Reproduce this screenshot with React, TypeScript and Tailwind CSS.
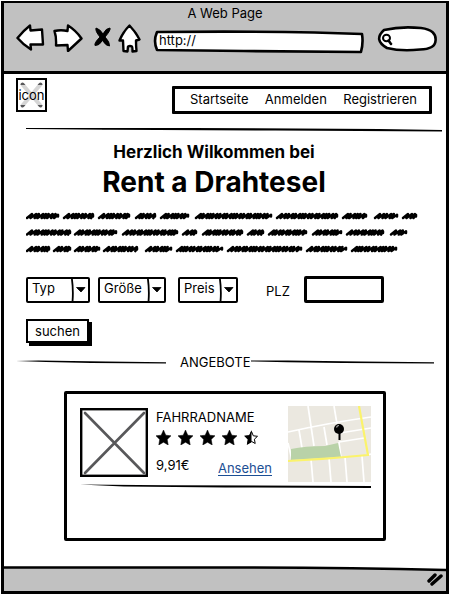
import React from "react";

const scribbleRows: [number, number][][] = [
  [[1, 32], [38, 67], [73, 103], [110, 129], [135, 162], [170, 245], [251, 311], [317, 340], [349, 371], [377, 390]],
  [[1, 44], [49, 90], [97, 151], [157, 170], [177, 216], [222, 237], [243, 280], [287, 315], [321, 357], [365, 380]],
  [[1, 23], [28, 44], [49, 73], [78, 111], [120, 145], [151, 196], [202, 275], [281, 320], [326, 370]],
];

const strokeSteps = [3, 4.2, 2.6, 4.4, 2.8, 2.6, 4];

function scribblePath(from: number, to: number, y: number) {
  let path = `M${from} ${y + 2}`;
  let i = from % 7;
  let x = from + 3;
  while (x < to - 2) {
    path += ` L${x + 2} ${y - 2} L${x + 0.5} ${y + 2.1}`;
    x += strokeSteps[i % 7];
    i++;
  }
  return `${path} L${to} ${y - 1.2} L${to} ${y + 0.5}`;
}

function Scribble() {
  return (
    <svg viewBox="0 0 392 46" className="block w-full" role="img" aria-label="Text">
      {scribbleRows.map((row, r) =>
        row.map(([a, b]) => (
          <path
            key={`${r}-${a}`}
            d={scribblePath(a, b, 6 + r * 16.5)}
            fill="none"
            stroke="#000"
            strokeWidth="2.5"
            strokeLinecap="round"
            strokeLinejoin="round"
          />
        ))
      )}
    </svg>
  );
}

function Rule({ points, className = "" }: { points: string; className?: string }) {
  return (
    <svg viewBox="0 0 100 4" preserveAspectRatio="none" aria-hidden="true" className={`block h-1 ${className}`}>
      <polygon points={points} />
    </svg>
  );
}

function Outline({ box, d }: { box: string; d: string }) {
  return (
    <svg viewBox={box} preserveAspectRatio="none" aria-hidden="true" className="absolute inset-0 size-full">
      <path d={d} fill="#fff" stroke="#000" strokeWidth="2.6" strokeLinejoin="round" />
    </svg>
  );
}

function Toolbar() {
  const iconProps = {
    fill: "#fff",
    stroke: "#000",
    strokeWidth: 2.4,
    strokeLinejoin: "round" as const,
    strokeLinecap: "round" as const,
  };
  return (
    <div className="flex items-center pr-[9px] pl-3">
      <button aria-label="Back" className="mr-2">
        <svg width="29" height="28" viewBox="0 0 29 28" {...iconProps}>
          <path d="M1.500 14Q7 7 14 1.500L14.500 6.500 26 5.500Q26.500 13 27 20.500L14.500 20.500 15 25.500Q7 20.500 1.500 14Z" />
        </svg>
      </button>
      <button aria-label="Forward" className="mr-2.5">
        <svg width="30" height="28" viewBox="0 0 30 28" {...iconProps}>
          <path d="M1.500 7Q8 5.500 14.500 7L15 1.500Q23 6.500 28.500 14.500L15 27 14.500 21 3 21.500Q3.500 13 1.500 7Z" />
        </svg>
      </button>
      <button aria-label="Stop" className="mr-1.5">
        <svg width="19" height="24" viewBox="0 0 19 24">
          <path d="M3 2Q7 3 10 8Q13 2 17 2Q18 4 12 11Q17 16 16.500 20Q13 20 9.500 14.500Q6 20 2 19.500Q1 17 7 11Q2 5 3 2Z" stroke="#000" strokeLinejoin="round" />
        </svg>
      </button>
      <button aria-label="Home" className="mr-3">
        <svg width="23" height="29" viewBox="0 0 23 29" {...iconProps}>
          <path d="M11.500 1.500Q17 7 21.500 15.500L18 16.500Q18 22 18.500 27L14.500 27.500Q14.500 23 14 22.500Q12 21.500 10 22.500L9.500 27.500 5.500 27 5 16.500 1.500 16.500Q5 8 11.500 1.500Z" />
        </svg>
      </button>
      <div className="relative mt-2 flex h-6 flex-1">
        <Outline box="0 0 210 24" d="M4 2Q90 1 160 2.500L207 4Q208.500 13 206 22L90 21 4 20Q0 11 4 2Z" />
        <input aria-label="Address" defaultValue="http://" className="relative w-full min-w-0 bg-transparent px-1.5 pb-0.5 text-[13px] outline-none" />
      </div>
      <div className="relative ml-3 flex h-[27px] w-[60px]">
        <Outline box="0 0 60 27" d="M7 5Q24 1 44 3Q60 5 58.500 16Q58 24 43 24.500Q24 26.500 10 23Q-4 15 7 5Z" />
        <svg aria-hidden="true" viewBox="0 0 12 14" className="absolute top-2 left-1 h-3.5 w-3" fill="none" stroke="#000" strokeWidth="2" strokeLinecap="round">
          <ellipse cx="5.500" cy="5" rx="3.500" ry="3.300" />
          <path d="M7.500 7.500 10 11" strokeWidth="2.500" />
        </svg>
        <input aria-label="Search" className="relative w-full min-w-0 bg-transparent pr-2 pl-4 text-[13px] outline-none" />
      </div>
    </div>
  );
}

function Dropdown({ label, width }: { label: string; width: string }) {
  return (
    <div className={`relative h-[26px] ${width}`}>
      <select aria-label={label} className="block size-full appearance-none rounded-[2px] border-2 border-black bg-white pb-0.5 pl-1 text-[13px] outline-none">
        <option>{label}</option>
      </select>
      <svg aria-hidden="true" viewBox="0 0 19 26" className="pointer-events-none absolute top-0 right-0 h-full w-[19px]">
        <path d="M.8 1Q2.500 13 1.500 25" fill="none" stroke="#000" strokeWidth="1.800" />
        <path d="M5.500 10.500 14 10.500 10 15Z" stroke="#000" strokeWidth=".8" />
      </svg>
    </div>
  );
}

function Stars() {
  const star = "M7.500 0 9.800 5.200 15 5.800 11.200 9.400 12.200 15 7.500 12.200 2.800 15 3.700 9.400 0 5.800 5.200 5.200Z";
  return (
    <div role="img" aria-label="4,5 Sterne" className="flex gap-[7px]">
      {[0, 1, 2, 3].map((i) => (
        <svg key={i} width="15" height="15" viewBox="0 0 15 15">
          <path d={star} stroke="#000" strokeWidth=".5" />
        </svg>
      ))}
      <svg width="15" height="15" viewBox="0 0 15 15">
        <path d="M7.500 1.500 9.300 5.800 13.500 6.300 10.400 9.200 11.200 13.500 7.500 11.400 3.800 13.500 4.600 9.200 1.500 6.300 5.700 5.800Z" fill="#fff" stroke="#000" />
        <path d="M7.500 0V12.200L2.800 15 3.700 9.400 0 5.800 5.200 5.200Z" />
      </svg>
    </div>
  );
}

function MapPreview() {
  return (
    <svg role="img" aria-label="Karte" width="83" height="76" viewBox="0 0 83 76" className="block shrink-0">
      <rect width="83" height="76" fill="#ebe8e0" />
      <g fill="none" stroke="#fff" strokeWidth="1.700">
        <path d="M0 26Q40 17 83 11M52 27 83 22M51 36 76 32M20 0Q23 20 26 40M46 0 49 18M11 24 14 42M36 21 39 39M0 37 4 54M51 36 53 52M23 53 25 76M41 52 43 76M57 51 59 76M74 50 76 76M79 49 83 48" />
      </g>
      <path d="M3 43Q17 40 37 40L50 37 53 51 3 54Z" fill="#b9d2a8" />
      <path d="M0 55Q40 53 80 49L71 0" fill="none" stroke="#fbf36b" strokeWidth="2.200" />
      <path d="M51.500 27V34" stroke="#000" strokeWidth="2" />
      <circle cx="51" cy="23" r="5" />
      <path d="M48.500 21.500Q49 19.500 51 19.500" fill="none" stroke="#aaa" strokeWidth="1.200" />
    </svg>
  );
}

function Offer() {
  return (
    <article className="mx-[60px] mt-5 flex min-h-[150px] flex-col rounded-[2px] border-[3px] border-black pt-3 pr-3 pl-[13px]">
      <div className="flex">
        <svg role="img" aria-label="Fahrrad" width="68" height="69" viewBox="0 0 68 69" className="mt-0.5 shrink-0">
          <rect x="1.200" y="1.200" width="65.600" height="66.600" fill="#fff" stroke="#000" strokeWidth="2.400" />
          <path d="M5 5 64 65M64 5 5 65" stroke="#58585a" strokeWidth="2.600" strokeLinecap="round" />
        </svg>
        <div className="ml-2 flex flex-1 flex-col pt-0.5">
          <h2 className="text-[13px] leading-[18px]">FAHRRADNAME</h2>
          <div className="mt-1">
            <Stars />
          </div>
          <div className="mt-3 flex items-start justify-between pr-4">
            <span className="text-[13px] leading-4">9,91€</span>
            <a href="#ansehen" className="mt-1 border-b border-[#1c4f94] text-[13px] leading-[14px] text-[#1c4f94]">Ansehen</a>
          </div>
        </div>
        <MapPreview />
      </div>
      <Rule points="0,0.500 30,1.200 100,2 100,4 50,3.400 15,2.600" className="mt-0.5 w-full" />
    </article>
  );
}

export default function App() {
  return (
    <div className="flex min-h-screen flex-col bg-white p-px font-['Inter','Liberation_Sans',sans-serif] text-black">
      <div className="flex flex-1 flex-col border-[3px] border-t-2 border-black">
        <header className="border-b-[3px] border-black bg-[#c1c1c1] pt-px pb-[17px]">
          <div className="text-center text-[13px] leading-[18px]">A Web Page</div>
          <Toolbar />
        </header>

        <main className="flex-1 pb-[25px]">
          <div className="flex items-start justify-between pt-1 pr-3.5 pl-3">
            <div className="relative flex h-[34px] w-[31px] items-center justify-center border-2 border-black">
              <svg aria-hidden="true" viewBox="0 0 27 30" className="absolute inset-0 size-full">
                <path d="M4.500 4.500 22.500 25.500M22.500 4.500 4.500 25.500" stroke="#58585a" strokeWidth="4" strokeLinecap="round" />
              </svg>
              <span className="relative -mx-1 bg-white/75 text-[13px] leading-5">icon</span>
            </div>
            <nav className="mt-2 flex h-7 w-[260px] items-center justify-between rounded-[1px] border-[3px] border-black pr-3 pl-[15px] text-[13px]">
              <a href="#startseite">Startseite</a>
              <a href="#anmelden">Anmelden</a>
              <a href="#registrieren">Registrieren</a>
            </nav>
          </div>
          <div className="mt-3.5 pr-1 pl-[22px]">
            <Rule points="0,0 40,0 85,1 100,2 100,3.500 60,2.500 20,1.700 0,1" className="w-full" />
          </div>

          <h1 className="mt-2 pr-[22px] text-center font-bold">
            <span className="block text-[17px] leading-6">Herzlich Wilkommen bei</span>
            <span className="block text-[28px] leading-9">Rent a Drahtesel</span>
          </h1>
          <div className="mt-2.5 pr-7 pl-[22px]">
            <Scribble />
          </div>

          <form className="mt-5 pl-[22px]">
            <div className="flex items-center">
              <Dropdown label="Typ" width="w-16" />
              <div className="ml-2">
                <Dropdown label="Größe" width="w-[68px]" />
              </div>
              <div className="ml-3">
                <Dropdown label="Preis" width="w-[60px]" />
              </div>
              <label htmlFor="plz" className="mt-1 ml-7 text-[13px]">PLZ</label>
              <input id="plz" className="ml-3.5 h-[27px] w-20 rounded-[2px] border-[3px] border-black px-1 text-[13px] outline-none" />
            </div>
            <button type="button" className="mt-4 block h-6 w-[63px] border-2 border-black bg-white text-[13px] leading-5 shadow-[3px_3px_0_#000]">suchen</button>
          </form>

          <div className="mt-2.5 flex items-center pr-3 pl-3">
            <Rule points="0,1 15,0.500 60,1.500 100,2.300 100,3.500 50,3 20,2" className="w-[150px]" />
            <span className="ml-3.5 text-[13px] leading-[18px]">ANGEBOTE</span>
            <Rule points="0,0.500 20,0.500 60,1.500 100,2.300 100,3.500 50,3 20,2.300 0,1.500" className="flex-1" />
          </div>

          <Offer />
        </main>

        <footer className="bg-[#c1c1c1]">
          <svg aria-hidden="true" viewBox="0 0 442 6" preserveAspectRatio="none" className="block h-1.5 w-full bg-white">
            <path d="M0 1 250 1Q350 1 442 4V6H0Z" fill="#c1c1c1" />
            <path d="M0 1.500H250Q350 1.500 442 4" fill="none" stroke="#000" strokeWidth="2.600" />
          </svg>
          <div className="flex h-[19px] items-start justify-end pr-0.5">
            <svg aria-hidden="true" width="18" height="14" viewBox="0 0 18 14" stroke="#000" strokeWidth="3.400" strokeLinecap="round">
              <path d="M3 9 9 3M6 12 15 4" />
            </svg>
          </div>
        </footer>
      </div>
    </div>
  );
}
